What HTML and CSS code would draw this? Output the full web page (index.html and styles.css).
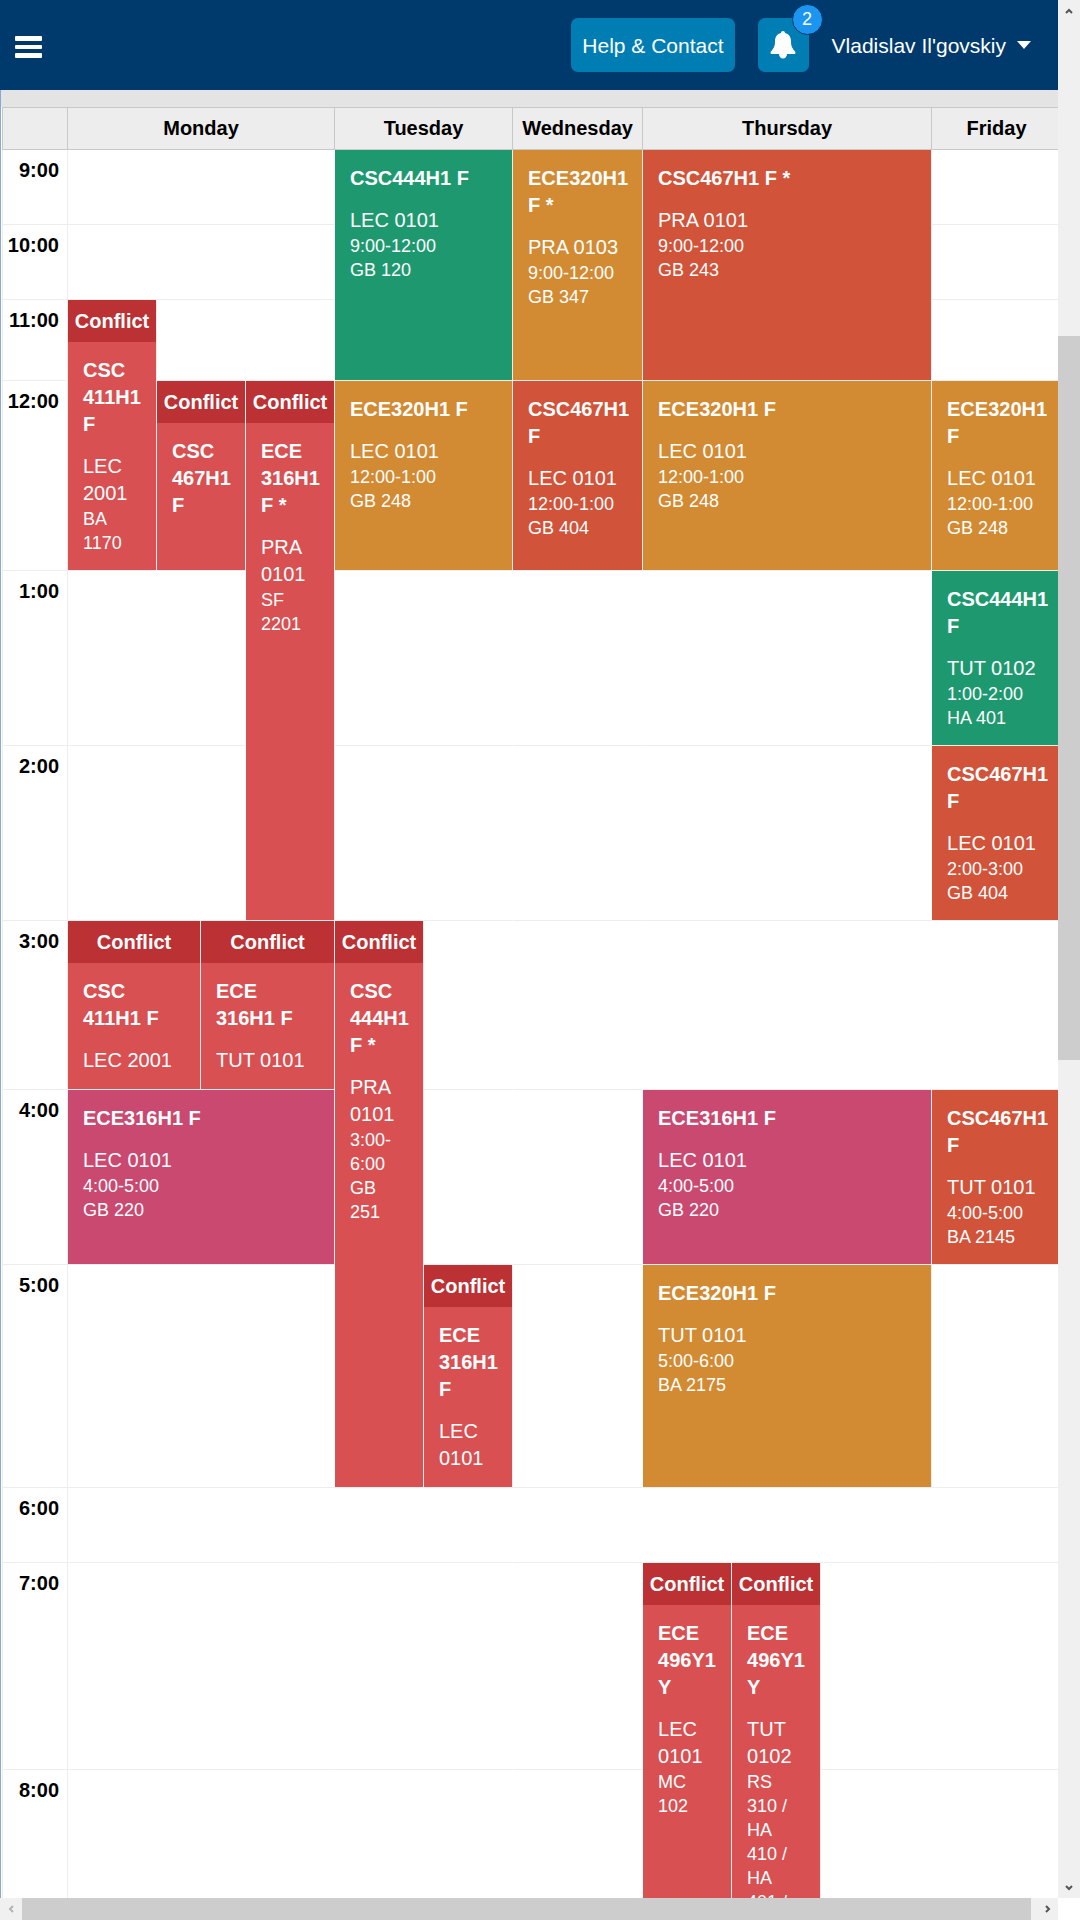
FILE: index.html
```html
<!DOCTYPE html>
<html lang="en">
<head>
<meta charset="utf-8">
<meta name="viewport" content="width=device-width, initial-scale=1">
<title>Timetable</title>
<link rel="stylesheet" href="styles.css">
</head>
<body>
<div class="app">
  <div class="view">
    <header class="topbar">
      <button class="menu" type="button" aria-label="Menu">
        <svg viewBox="0 0 27 22" aria-hidden="true"><rect width="27" height="5" rx="1"/><rect y="9" width="27" height="4" rx="1"/><rect y="17" width="27" height="5" rx="1"/></svg>
      </button>
      <div class="actions">
        <a class="help" href="#">Help &amp; Contact</a>
        <button class="bell" type="button" aria-label="Notifications">
          <svg viewBox="0 0 26 28" aria-hidden="true"><path d="M13 0c1.200 0 2 .8 2 2 3.800.9 6 4 6 8 0 5.500 1.300 7 3 9.200.8 1 1.500 1.600 1.500 2.600 0 .800-.5 1.200-1.300 1.200H17a4 4.500 0 0 1-8 0H1.800C1 23 .5 22.600.5 21.800c0-1 .7-1.600 1.500-2.600C3.700 17 5 15.500 5 10c0-4 2.200-7.100 6-8 0-1.200.8-2 2-2z"/></svg>
          <span class="badge">2</span>
        </button>
        <button class="user" type="button">Vladislav Il'govskiy<svg viewBox="0 0 14 8" aria-hidden="true"><path d="M0 0h14L7 8z"/></svg></button>
      </div>
    </header>
    <main class="timetable">
      <table>
        <colgroup>
          <col class="c-time"><col class="c-third"><col class="c-left"><col class="c-right"><col class="c-third">
          <col class="c-third"><col class="c-third"><col class="c-day">
          <col class="c-third"><col class="c-third"><col class="c-rest"><col class="c-day">
        </colgroup>
        <thead>
          <tr><th></th><th colspan="4" scope="col">Monday</th><th colspan="2" scope="col">Tuesday</th><th scope="col">Wednesday</th><th colspan="3" scope="col">Thursday</th><th scope="col">Friday</th></tr>
        </thead>
        <tbody>
          <tr class="h-short">
            <th scope="row">9:00</th>
            <td colspan="4"></td>
            <td class="green" colspan="2" rowspan="3"><h3>CSC444H1 F</h3><p>LEC 0101</p><small>9:00-12:00</small><small>GB 120</small></td>
            <td class="orange" rowspan="3"><h3>ECE320H1 F *</h3><p>PRA 0103</p><small>9:00-12:00</small><small>GB 347</small></td>
            <td class="brick" colspan="3" rowspan="3"><h3>CSC467H1 F *</h3><p>PRA 0101</p><small>9:00-12:00</small><small>GB 243</small></td>
            <td></td>
          </tr>
          <tr class="h-short"><th scope="row">10:00</th><td colspan="4"></td><td></td></tr>
          <tr class="h-eleven">
            <th scope="row">11:00</th>
            <td class="clash" rowspan="2"><strong>Conflict</strong><h3>CSC 411H1 F</h3><p>LEC 2001</p><small>BA 1170</small></td>
            <td colspan="3"></td>
            <td></td>
          </tr>
          <tr class="h-noon">
            <th scope="row">12:00</th>
            <td class="clash" colspan="2"><strong>Conflict</strong><h3>CSC 467H1 F</h3></td>
            <td class="clash" rowspan="3"><strong>Conflict</strong><h3>ECE 316H1 F *</h3><p>PRA 0101</p><small>SF 2201</small></td>
            <td class="orange" colspan="2"><h3>ECE320H1 F</h3><p>LEC 0101</p><small>12:00-1:00</small><small>GB 248</small></td>
            <td class="brick"><h3>CSC467H1 F</h3><p>LEC 0101</p><small>12:00-1:00</small><small>GB 404</small></td>
            <td class="orange" colspan="3"><h3>ECE320H1 F</h3><p>LEC 0101</p><small>12:00-1:00</small><small>GB 248</small></td>
            <td class="orange"><h3>ECE320H1 F</h3><p>LEC 0101</p><small>12:00-1:00</small><small>GB 248</small></td>
          </tr>
          <tr class="h-full">
            <th scope="row">1:00</th>
            <td colspan="3"></td><td colspan="2"></td><td></td><td colspan="3"></td>
            <td class="green"><h3>CSC444H1 F</h3><p>TUT 0102</p><small>1:00-2:00</small><small>HA 401</small></td>
          </tr>
          <tr class="h-full">
            <th scope="row">2:00</th>
            <td colspan="3"></td><td colspan="2"></td><td></td><td colspan="3"></td>
            <td class="brick"><h3>CSC467H1 F</h3><p>LEC 0101</p><small>2:00-3:00</small><small>GB 404</small></td>
          </tr>
          <tr class="h-three">
            <th scope="row">3:00</th>
            <td class="clash" colspan="2"><strong>Conflict</strong><h3>CSC 411H1 F</h3><p>LEC 2001</p></td>
            <td class="clash" colspan="2"><strong>Conflict</strong><h3>ECE 316H1 F</h3><p>TUT 0101</p></td>
            <td class="clash" rowspan="3"><strong>Conflict</strong><h3>CSC 444H1 F *</h3><p>PRA 0101</p><small>3:00-6:00</small><small>GB 251</small></td>
            <td></td><td></td><td colspan="3"></td><td></td>
          </tr>
          <tr class="h-full">
            <th scope="row">4:00</th>
            <td class="pink" colspan="4"><h3>ECE316H1 F</h3><p>LEC 0101</p><small>4:00-5:00</small><small>GB 220</small></td>
            <td></td><td></td>
            <td class="pink" colspan="3"><h3>ECE316H1 F</h3><p>LEC 0101</p><small>4:00-5:00</small><small>GB 220</small></td>
            <td class="brick"><h3>CSC467H1 F</h3><p>TUT 0101</p><small>4:00-5:00</small><small>BA 2145</small></td>
          </tr>
          <tr class="h-five">
            <th scope="row">5:00</th>
            <td colspan="4"></td>
            <td class="clash"><strong>Conflict</strong><h3>ECE 316H1 F</h3><p>LEC 0101</p></td>
            <td></td>
            <td class="orange" colspan="3"><h3>ECE320H1 F</h3><p>TUT 0101</p><small>5:00-6:00</small><small>BA 2175</small></td>
            <td></td>
          </tr>
          <tr class="h-short"><th scope="row">6:00</th><td colspan="4"></td><td colspan="2"></td><td></td><td colspan="3"></td><td></td></tr>
          <tr class="h-seven">
            <th scope="row">7:00</th>
            <td colspan="4"></td><td colspan="2"></td><td></td>
            <td class="clash" rowspan="2"><strong>Conflict</strong><h3>ECE 496Y1 Y</h3><p>LEC 0101</p><small>MC 102</small></td>
            <td class="clash" rowspan="2"><strong>Conflict</strong><h3>ECE 496Y1 Y</h3><p>TUT 0102</p><small>RS 310 / HA 410 / HA 401 /</small></td>
            <td></td><td></td>
          </tr>
          <tr class="h-seven"><th scope="row">8:00</th><td colspan="4"></td><td colspan="2"></td><td></td><td></td><td></td></tr>
        </tbody>
      </table>
    </main>
  </div>
  <div class="bar bar-v" aria-hidden="true">
    <svg viewBox="0 0 22 22"><path d="M8 13l3-3 3 3"/></svg>
    <div class="track"><div class="thumb"></div></div>
    <svg viewBox="0 0 22 22"><path d="M8 10l3 3 3-3"/></svg>
  </div>
  <div class="bar bar-h" aria-hidden="true">
    <svg class="off" viewBox="0 0 22 22"><path d="M13 8l-3 3 3 3"/></svg>
    <div class="track"><div class="thumb"></div></div>
    <svg viewBox="0 0 22 22"><path d="M10 8l3 3-3 3"/></svg>
  </div>
</div>
</body>
</html>
```

FILE: styles.css
```css
* { box-sizing: border-box; }

body {
  margin: 0;
  font: 20px/27px "Liberation Sans", Arial, sans-serif;
  color: #000;
  background: #fff;
}

.app {
  display: grid;
  grid-template: minmax(0, 1fr) 22px / minmax(0, 1fr) 22px;
  height: 100vh;
}

.view {
  display: flex;
  flex-direction: column;
  overflow: hidden;
}

/* top navigation */
.topbar {
  display: flex;
  flex: none;
  align-items: center;
  justify-content: space-between;
  height: 90px;
  padding: 0 27px 0 15px;
  background: #003a6d;
}

button {
  border: 0;
  padding: 0;
  font: inherit;
  color: inherit;
  background: none;
}

.menu { display: flex; padding-top: 4px; }
.menu svg { width: 27px; height: 22px; fill: #fff; }

.actions {
  display: flex;
  align-items: center;
  gap: 23px;
  font-size: 21px;
  color: #fff;
}

.help,
.bell {
  display: flex;
  align-items: center;
  justify-content: center;
  height: 54px;
  border-radius: 7px;
  background: #007eb4;
}

.help {
  padding: 0 11px;
  color: #fff;
  text-decoration: none;
}

.bell { position: relative; width: 51px; }
.bell svg { width: 26px; height: 28px; fill: #fff; }

.badge {
  position: absolute;
  top: -14px;
  right: -14px;
  width: 31px;
  height: 31px;
  border: 1px solid #003a6d;
  border-radius: 50%;
  font-size: 18px;
  line-height: 29px;
  text-align: center;
  background: #1c95f0;
}

.user { display: flex; align-items: center; gap: 11px; }
.user svg { width: 14px; height: 8px; fill: #fff; }

/* weekly grid */
.timetable {
  flex: 1;
  min-height: 0;
  overflow: hidden;
  padding: 17px 0 0 1px;
  border-left: 1px solid #8ba5dd;
  background: linear-gradient(#e4e4e4 17px, #fff 17px);
}

table {
  width: calc(100% + 4px);
  table-layout: fixed;
  border-collapse: separate;
  border-spacing: 0;
}

.c-time { width: 66px; }
.c-third { width: 89px; }
.c-left { width: 44px; }
.c-right { width: 45px; }
.c-rest { width: 111px; }
.c-day { width: 130px; }

thead th {
  height: 43px;
  padding: 0;
  border: solid #c8c8c8;
  border-width: 1px 1px 1px 0;
  background: #ededed;
}

tbody th {
  padding: 7px 8px 0 0;
  border: solid #ededed;
  border-width: 0 1px 1px 0;
  text-align: right;
  vertical-align: top;
}

th:first-child { border-left-width: 1px; }

td {
  padding: 0;
  border: solid #ededed;
  border-width: 0 1px 1px 0;
  vertical-align: top;
}

td:empty { border-right-color: #fff; }

.h-short { height: 75px; }
.h-eleven { height: 81px; }
.h-noon { height: 190px; }
.h-full { height: 175px; }
.h-three { height: 169px; }
.h-five { height: 223px; }
.h-seven { height: 207px; }

.green, .orange, .brick, .pink, .clash { color: #fff; background-clip: padding-box; }
.green { background-color: #1e996f; }
.orange { background-color: #d28a33; }
.brick { background-color: #d15339; }
.pink { background-color: #c94970; }
.clash { background-color: #d85052; }

td strong {
  display: block;
  padding: 8px 0 7px;
  text-align: center;
  background: #bb3134;
}

td h3 {
  margin: 0;
  padding: 15px 15px 0;
  font-size: 20px;
}

td p { margin: 0; padding: 15px 15px 0; }

td small {
  display: block;
  padding: 0 15px;
  font-size: 18px;
  line-height: 24px;
}

/* scroll bars */
.bar { display: flex; background: #f0f0f0; }
.bar-v { flex-direction: column; }
.bar svg {
  flex: none;
  width: 22px;
  height: 22px;
  fill: none;
  stroke: #555;
  stroke-width: 2;
}
.bar .off { stroke: #b4b4b4; }
.track { display: flex; flex: 1; }
.bar-v .track { flex-direction: column; }
.track::before,
.track::after { content: ""; }
.thumb { background: #cdcdcd; }
.bar-v .track::before { flex: 314; }
.bar-v .thumb { flex: 724; }
.bar-v .track::after { flex: 816; }
.bar-h .thumb { flex: 1; margin-right: 5px; }
```
